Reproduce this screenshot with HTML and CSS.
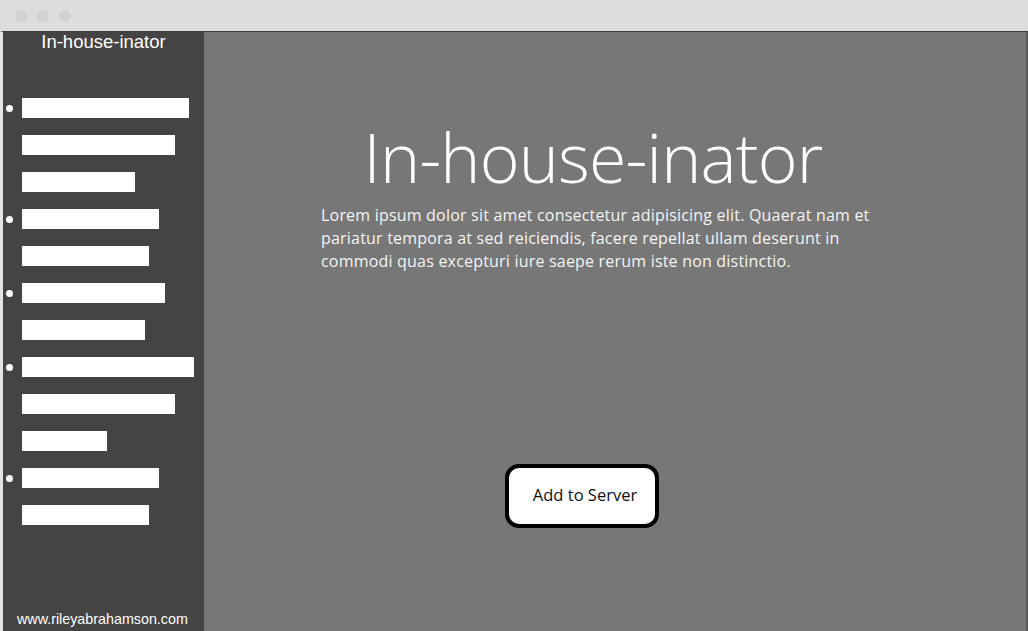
FILE: index.html
```html
<!DOCTYPE html>
<html>
<head>
<meta charset="utf-8">
<link rel="stylesheet" href="styles.css">
</head>
<body>
<div class="titlebar">
  <span class="dot"></span><span class="dot"></span><span class="dot"></span>
</div>
<div class="window">
  <aside class="sidebar">
    <div class="side-title">In-house-inator</div>
    <ul class="menu">
      <li><span class="bars"><span class="bar" style="width:167px"></span><span class="bar" style="width:153px"></span><span class="bar" style="width:113px"></span></span></li>
      <li><span class="bars"><span class="bar" style="width:137px"></span><span class="bar" style="width:127px"></span></span></li>
      <li><span class="bars"><span class="bar" style="width:143px"></span><span class="bar" style="width:123px"></span></span></li>
      <li><span class="bars"><span class="bar" style="width:172px"></span><span class="bar" style="width:153px"></span><span class="bar" style="width:85px"></span></span></li>
      <li><span class="bars"><span class="bar" style="width:137px"></span><span class="bar" style="width:127px"></span></span></li>
    </ul>
    <div class="side-footer">www.rileyabrahamson.com</div>
  </aside>
  <main class="main">
    <div class="content">
      <h1 class="headline">In-house-inator</h1>
      <p class="intro">Lorem ipsum dolor sit amet consectetur adipisicing elit. Quaerat nam et pariatur tempora at sed reiciendis, facere repellat ullam deserunt in commodi quas excepturi iure saepe rerum iste non distinctio.</p>
    </div>
    <div class="actions">
      <button class="add-btn">Add to Server</button>
    </div>
  </main>
</div>
</body>
</html>
```
FILE: styles.css
```css
html, body {
  margin: 0;
  padding: 0;
  background: #dddddd;
  overflow: hidden;
}
.titlebar {
  height: 31px;
  background: #dddddd;
  display: flex;
  align-items: center;
  gap: 10px;
  padding-left: 15px;
  box-sizing: border-box;
}
.dot {
  width: 12px;
  height: 12px;
  border-radius: 50%;
  background: #d0d0d0;
}
.window {
  display: flex;
  height: 600px;
  border-top: 1px solid #3c3c3c;
  border-left: 3px solid #e4e4e4;
  border-right: 2px solid #5a5a5a;
}
.sidebar {
  width: 201px;
  background: #444444;
  display: flex;
  flex-direction: column;
  color: #ffffff;
  font-family: "Liberation Sans", Arial, sans-serif;
}
.side-title {
  text-align: center;
  font-size: 18.5px;
  line-height: 20px;
}
.menu {
  list-style: none;
  margin: 46px 0 0 0;
  padding: 0;
  display: flex;
  flex-direction: column;
  gap: 17px;
}
.menu li {
  position: relative;
  padding-left: 19px;
}
.menu li::before {
  content: "";
  position: absolute;
  left: 3px;
  top: 7px;
  width: 7px;
  height: 7px;
  border-radius: 50%;
  background: #ffffff;
}
.bars {
  display: flex;
  flex-direction: column;
  gap: 17px;
}
.bar {
  display: block;
  height: 20px;
  background: #ffffff;
}
.side-footer {
  margin-top: auto;
  font-size: 14.3px;
  line-height: 16px;
  padding: 0 0 5px 14px;
}
.main {
  flex: 1;
  background: #777777;
  display: flex;
  flex-direction: column;
  color: #ffffff;
  font-family: "Open Sans", "Noto Sans", sans-serif;
}
.content {
  width: 560px;
  margin-left: 117px;
  padding-top: 82px;
}
.headline {
  margin: 0 0 4px 0;
  width: 544px;
  font-weight: 300;
  font-size: 68px;
  line-height: 86px;
  text-align: center;
  letter-spacing: -0.8px;
}
.intro {
  margin: 0;
  font-size: 16px;
  line-height: 23px;
  letter-spacing: 0.2px;
  color: #f4f4f4;
}
.actions {
  margin-top: 191px;
  padding-left: 301px;
}
.add-btn {
  width: 154px;
  height: 64px;
  border: 4px solid #000000;
  border-radius: 14px;
  background: #ffffff;
  color: #111111;
  font-family: "Open Sans", "Noto Sans", sans-serif;
  font-size: 16.5px;
  padding: 0 0 3px 6px;
}
```
